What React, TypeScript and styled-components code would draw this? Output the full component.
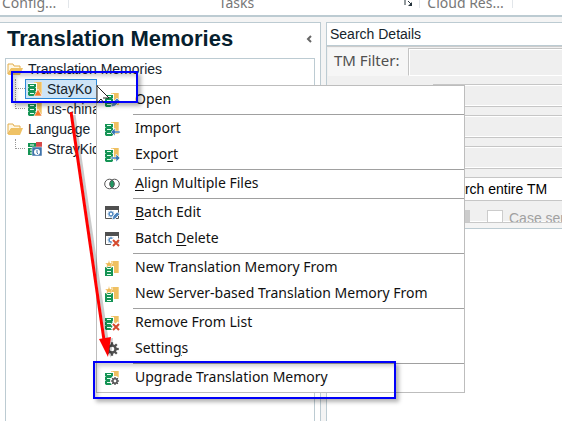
import React from "react";
import styled, { createGlobalStyle } from "styled-components";

const ui = '"Noto Sans", "Open Sans", sans-serif';
const plain = '"Liberation Sans", Arial, sans-serif';

const GlobalStyle = createGlobalStyle`
  * { box-sizing: border-box; }
  body { margin: 0; background: #f4f4f4; overflow: hidden; }
  button, input { font: inherit; color: inherit; border: 0; padding: 0; margin: 0; background: none; }
`;

const Page = styled.div`
  position: relative;
  display: flex;
  flex-direction: column;
  height: 100vh;
  overflow: hidden;
  font-family: ${plain};
  font-size: 14px;
  color: #16242c;
`;

const Ribbon = styled.header`
  display: flex;
  flex: none;
  height: 17px;
  background: #fff;
  border-bottom: 2px solid #bccbd2;
  overflow: hidden;
`;

const RibbonGroup = styled.div<{ $width: number; $align?: string }>`
  display: flex;
  flex: none;
  align-items: flex-end;
  justify-content: ${(p) => p.$align ?? "center"};
  width: ${(p) => p.$width}px;
  height: 8px;
  padding: 0 ${(p) => (p.$width > 200 ? 16 : 2)}px 0 2px;
  box-shadow: 1px 0 #e2e6ea;
  font: 14px/16px ${ui};
  color: #777;
  position: relative;
  white-space: nowrap;
  span { height: 13px; }
`;

const Launcher = styled.button`
  position: absolute;
  right: 6px;
  top: 0;
  width: 9px;
  height: 7px;
  svg { display: block; }
`;

const Workspace = styled.main`
  display: flex;
  flex: 1;
  gap: 5px;
  padding-top: 5px;
  min-height: 0;
`;

const Navigator = styled.section`
  display: flex;
  flex-direction: column;
  flex: 0 0 321px;
  padding: 0 5px;
  background: #fff;
  border: solid #bccbd2;
  border-width: 1px 1px 0 0;
`;

const NavHeader = styled.div`
  display: flex;
  align-items: flex-start;
  justify-content: space-between;
  height: 35px;
  padding: 0 2px;
  h1 { margin: 0; font: bold 22px/32px ${plain}; color: #06202e; white-space: nowrap; }
  button { display: flex; margin-top: 12px; }
`;

const Tree = styled.ul`
  flex: 1;
  margin: 0;
  padding: 0;
  list-style: none;
  border: solid #bccbd2;
  border-width: 1px 1px 0;
`;

const Node = styled.li<{ $child?: boolean; $last?: boolean }>`
  display: flex;
  align-items: center;
  height: 20px;
  gap: ${(p) => (p.$child ? 3 : 5)}px;
  padding-left: 1px;
  white-space: nowrap;
  &::before {
    content: "";
    display: ${(p) => (p.$child ? "block" : "none")};
    width: 10px;
    height: ${(p) => (p.$last ? 10 : 20)}px;
    margin-left: 8px;
    margin-right: -4px;
    align-self: flex-start;
    border-left: 1px dotted #999;
    background: repeating-linear-gradient(90deg, #999 0 1px, transparent 1px 2px) 0 9px / 100% 1px no-repeat;
  }
`;

const NodeLabel = styled.button<{ $selected?: boolean }>`
  display: flex;
  align-items: center;
  gap: 4px;
  height: 20px;
  padding: 0 4px 0 1px;
  border: 1px solid ${(p) => (p.$selected ? "#2d8ad8" : "transparent")};
  background: ${(p) => (p.$selected ? "#cde4f7" : "transparent")};
`;

const Details = styled.section`
  display: flex;
  flex-direction: column;
  flex: 1;
  min-width: 0;
  background: #fff;
  border: solid #bccbd2;
  border-width: 1px 0 0 1px;
  h2 {
    margin: 0;
    padding: 0 3px;
    height: 22px;
    font: 14px/23px ${plain};
    border-bottom: 1px solid #bccbd2;
    box-sizing: content-box;
  }
`;

const Form = styled.div`
  display: flex;
  flex-direction: column;
  height: 177px;
  padding: 1px 0 0 1px;
  background: #f0f0f0;
  border-top: 1px solid #ccc;
  border-bottom: 1px solid #c8c8c8;
  box-shadow: inset 0 -1px #fff;
  overflow: hidden;
`;

const FilterRow = styled.div`
  display: flex;
  align-items: flex-start;
  flex: none;
  height: 28px;
  background: #f6f6f6;
  font: 15px/25px ${ui};
  color: #505050;
  margin-bottom: 8px;
  label { flex: 0 0 80px; padding-left: 6px; white-space: nowrap; }
  input {
    flex: 1;
    min-width: 0;
    align-self: stretch;
    background: #efefef;
    border: solid #c4c4c4;
    border-width: 1px 0 1px 1px;
    border-bottom-color: #fff;
    box-shadow: inset 1px 1px #fff;
  }
`;

const Field = styled.input`
  flex: none;
  height: 23px;
  margin: 0 0 8px 105px;
  background: #efefef;
  border: solid #c6c6c6;
  border-width: 1px 0 1px 1px;
  box-shadow: inset 0 1px #fff, inset 0 -1px #fff;
`;

const ScopeSelect = styled.select`
  flex: none;
  appearance: none;
  height: 24px;
  margin: 0 0 0 105px;
  padding: 0 0 0 6px;
  border: solid #c6c6c6;
  border-width: 1px 0 1px 1px;
  border-radius: 0;
  background: #fff;
  font: 14px/20px ${plain};
  color: #000;
`;

const Options = styled.div`
  display: flex;
  align-items: flex-start;
  gap: 17px;
  padding: 9px 0 0 125px;
  white-space: nowrap;
  color: #a0a0a0;
  label { display: flex; gap: 6px; }
  label span { line-height: 16px; }
`;

const Tick = styled.input`
  appearance: none;
  flex: none;
  width: 16px;
  height: 16px;
  background: #fff;
  border: 1px solid #ccc;
`;

const Stepper = styled.button`
  flex: none;
  width: 17px;
  height: 16px;
  background: #ccc;
`;

const Results = styled.div`
  flex: 1;
  border-top: 5px solid #f4f4f4;
  &::before { content: ""; display: block; border-top: 1px solid #bccbd2; }
`;

const Menu = styled.div`
  position: absolute;
  left: 96px;
  top: 85px;
  width: 369px;
  padding: 1px 0;
  background: #fff;
  border: 1px solid #bdbdbd;
`;

const MenuItem = styled.button`
  display: flex;
  align-items: center;
  gap: 15px;
  width: 100%;
  height: 26px;
  padding-left: 7px;
  font: 14px/24px ${ui};
  color: #111;
  white-space: nowrap;
  svg { flex: none; }
  span { height: 26px; }
  u { text-underline-offset: 2px; }
`;

const Divider = styled.hr`
  height: 1px;
  margin: 1px 0 1px 36px;
  border: 0;
  background: #a0a0a0;
`;

const Highlight = styled.div<{ $x: number; $y: number; $w: number; $h: number }>`
  position: absolute;
  left: ${(p) => p.$x}px;
  top: ${(p) => p.$y}px;
  width: ${(p) => p.$w}px;
  height: ${(p) => p.$h}px;
  border: 2px solid #0000fa;
  box-shadow: 3px 3px 4px rgba(0, 0, 0, 0.3), inset 3px 3px 4px rgba(0, 0, 0, 0.2);
  pointer-events: none;
`;

const Overlay = styled.svg`
  position: absolute;
  left: 0;
  top: 0;
  pointer-events: none;
`;

type Badge = "up" | "edit" | "in" | "out" | "star" | "x" | "gear";

const Gear = ({ x = 8, y = 8, r = 5, color = "#505050" }) => (
  <g stroke={color} fill="none">
    <circle cx={x} cy={y} r={r * 0.72} strokeWidth={r * 0.5} />
    {[0, 45, 90, 135, 180, 225, 270, 315].map((a) => (
      <path key={a} d={`M${x} ${y - r * 0.8}V${y - r * 1.35}`} strokeWidth={r * 0.45} transform={`rotate(${a} ${x} ${y})`} />
    ))}
  </g>
);

const Memory = ({ badge }: { badge: Badge }) => {
  const star = badge === "star";
  return (
    <svg width="16" height="16" viewBox="0 0 16 16" aria-hidden="true">
      <path d="M7 1h8v12H7z" fill="#efc062" />
      <path d="M7 1h2v2H7zM14 1h1v12h-1z" fill="#f5d48e" />
      <path d={star ? "M1 6h9v10H1z" : "M1 2h9v13H1z"} fill="#fff" />
      {(star ? [7, 10, 13] : [3, 7, 11]).map((y) => (
        <g key={y}>
          <path d={`M1 ${y}h8v${star ? 3 : 4}H1z`} fill="#159455" />
          <path d={`M3 ${y + 1}h4v1H3z`} fill="#e9fff3" />
          {!star && <path d={`M8 ${y + 3}h1v1H8zM1 ${y + 3}h1v1H1z`} fill="#9bd3b5" />}
        </g>
      ))}
      {badge === "up" && <path d="M11 8l4 7H7z" fill="#f37a2b" stroke="#fff" strokeWidth=".6" />}
      {badge === "edit" && <path d="M7 15l1-4 5-5 3 3-5 5z" fill="#4d84bd" stroke="#fff" strokeWidth=".7" />}
      {badge === "in" && <path d="M7 11l4-4v3h5v2h-5v3z" fill="#3976b5" stroke="#fff" strokeWidth=".6" />}
      {badge === "out" && <path d="M16 11l-4-4v3H7v2h5v3z" fill="#3976b5" stroke="#fff" strokeWidth=".6" />}
      {badge === "x" && (
        <g fill="none"><path d="M8 8l7 7M15 8l-7 7" stroke="#fff" strokeWidth="4" /><path d="M9 9l6 6M15 9l-6 6" stroke="#d5492d" strokeWidth="2" /></g>
      )}
      {star && <path d="M5 0l1 3 3 0-2 2 1 3-3-2-3 2 1-3-2-2 3 0z" fill="#efba55" stroke="#fff" strokeWidth=".4" />}
      {badge === "gear" && <g><circle cx="11" cy="11" r="5" fill="#fff" /><Gear x={11} y={11} r={3} /></g>}
    </svg>
  );
};

const FolderIcon = () => (
  <svg width="16" height="16" viewBox="0 0 16 16" aria-hidden="true">
    <path d="M1 13V3h5l1 2h6v3H4z" fill="#fff8e5" stroke="#e3ae4c" />
    <path d="M1 14L4 7h12l-3 7z" fill="#efc265" />
  </svg>
);

const CloudMemory = () => (
  <svg width="16" height="16" viewBox="0 0 16 16" aria-hidden="true">
    <path d="M9 1h6v6H9z" fill="#d64a4a" />
    <path d="M1 2h8v4H1zM1 7h4v7H1z" fill="#159455" />
    <path d="M3 4h4M3 9h2M3 12h2" stroke="#fff" />
    <path d="M5 6h10v9H5z" fill="#3f73aa" stroke="#fff" strokeWidth=".5" />
    <circle cx="10" cy="11" r="3" fill="#fff" /><path d="M10 9v3l1 1" stroke="#3f73aa" fill="none" />
  </svg>
);

const AlignIcon = () => (
  <svg width="16" height="16" viewBox="0 0 16 16" aria-hidden="true">
    <path d="M8 4c3 2 3 6 0 8-3-2-3-6 0-8z" fill="#209761" />
    <g fill="none" stroke="#555"><circle cx="5.5" cy="8" r="4.8" /><circle cx="10.5" cy="8" r="4.8" /></g>
  </svg>
);

const BatchIcon = ({ remove }: { remove?: boolean }) => (
  <svg width="16" height="16" viewBox="0 0 16 16" aria-hidden="true">
    <path d="M1.5 2.5h13v11h-13z" fill="#fff" stroke="#555" />
    <path d="M1 1h14v4H1z" fill="#505050" />
    <Gear x={7} y={9} r={2.5} color="#5389c0" />
    {remove ? (
      <g fill="none"><path d="M8 8l7 7M15 8l-7 7" stroke="#fff" strokeWidth="4" /><path d="M9 9l6 6M15 9l-6 6" stroke="#d5492d" strokeWidth="2" /></g>
    ) : (
      <path d="M8 15l1-4 4-4 3 2-5 5z" fill="#4d84bd" stroke="#fff" strokeWidth=".8" />
    )}
  </svg>
);

const SettingsIcon = () => (
  <svg width="16" height="16" viewBox="0 0 16 16" aria-hidden="true"><Gear /></svg>
);

const Mnemonic = ({ text }: { text: string }) => {
  const [before, key, after] = text.split("_");
  return <span>{before}{key && <u>{key}</u>}{after}</span>;
};

const groups: { icon: React.ReactNode; text: string }[][] = [
  [{ icon: <Memory badge="edit" />, text: "Open" }],
  [
    { icon: <Memory badge="in" />, text: "Import" },
    { icon: <Memory badge="out" />, text: "Expo_r_t" },
  ],
  [{ icon: <AlignIcon />, text: "_A_lign Multiple Files" }],
  [
    { icon: <BatchIcon />, text: "_B_atch Edit" },
    { icon: <BatchIcon remove />, text: "Batch _D_elete" },
  ],
  [
    { icon: <Memory badge="star" />, text: "New Translation Memory From" },
    { icon: <Memory badge="star" />, text: "New Server-based Translation Memory From" },
  ],
  [
    { icon: <Memory badge="x" />, text: "Remove From List" },
    { icon: <SettingsIcon />, text: "Settin_g_s" },
  ],
  [{ icon: <Memory badge="gear" />, text: "Upgrade Translation Memory" }],
];

export default function App() {
  return (
    <>
      <GlobalStyle />
      <Page>
        <Ribbon>
          <RibbonGroup $width={68} $align="flex-start"><span>Config...</span></RibbonGroup>
          <RibbonGroup $width={351}>
            <span>Tasks</span>
            <Launcher aria-label="More task options">
              <svg width="9" height="7" viewBox="0 0 9 7"><path d="M1 0v5M4 1l3 3" stroke="#26343d" fill="none" /><path d="M8 2v4H4z" fill="#26343d" /></svg>
            </Launcher>
          </RibbonGroup>
          <RibbonGroup $width={93}><span>Cloud Res...</span></RibbonGroup>
        </Ribbon>
        <Workspace>
          <Navigator>
            <NavHeader>
              <h1>Translation Memories</h1>
              <button aria-label="Collapse pane">
                <svg width="8" height="8" viewBox="0 0 8 8"><path d="M6 1L3 4l3 3" stroke="#666" strokeWidth="2" fill="none" /></svg>
              </button>
            </NavHeader>
            <Tree>
              <Node><FolderIcon /><span>Translation Memories</span></Node>
              <Node $child><NodeLabel $selected><Memory badge="up" />StayKo</NodeLabel></Node>
              <Node $child $last><NodeLabel><Memory badge="up" />us-china</NodeLabel></Node>
              <Node><FolderIcon /><span>Language</span></Node>
              <Node $child $last><NodeLabel><CloudMemory />StrayKids</NodeLabel></Node>
            </Tree>
          </Navigator>
          <Details>
            <h2>Search Details</h2>
            <Form>
              <FilterRow>
                <label htmlFor="filter">TM Filter:</label>
                <input id="filter" disabled />
              </FilterRow>
              <Field disabled aria-label="Source text" />
              <Field disabled aria-label="Target text" />
              <Field disabled aria-label="Field filter" />
              <ScopeSelect aria-label="Search scope"><option>Search entire TM</option></ScopeSelect>
              <Options>
                <Stepper disabled aria-label="Step value" />
                <label><Tick type="checkbox" disabled /><span>Case sensitive</span></label>
              </Options>
            </Form>
            <Results />
          </Details>
        </Workspace>
        <Menu role="menu">
          {groups.map((items, i) => (
            <React.Fragment key={i}>
              {i > 0 && <Divider />}
              {items.map(({ icon, text }) => (
                <MenuItem key={text} role="menuitem">{icon}<Mnemonic text={text} /></MenuItem>
              ))}
            </React.Fragment>
          ))}
        </Menu>
        <Highlight $x={11} $y={71} $w={127} $h={32} />
        <Highlight $x={93} $y={361} $w={303} $h={38} />
        <Overlay width="150" height="370" viewBox="0 0 150 370" aria-hidden="true">
          <g opacity=".2" transform="translate(3 2)">
            <path d="M71 113L104 338" stroke="#000" strokeWidth="3" />
            <path d="M98 338l12-2-2 20z" />
          </g>
          <path d="M71 112L104 340" stroke="#f00" strokeWidth="3" />
          <path d="M99 339l12-2-3 20z" fill="#f00" />
          <path d="M97 85v18l4-4 3 4" stroke="#222" fill="none" />
          <path d="M97 86l12 12h-6" stroke="#222" fill="#fff" />
        </Overlay>
      </Page>
    </>
  );
}
